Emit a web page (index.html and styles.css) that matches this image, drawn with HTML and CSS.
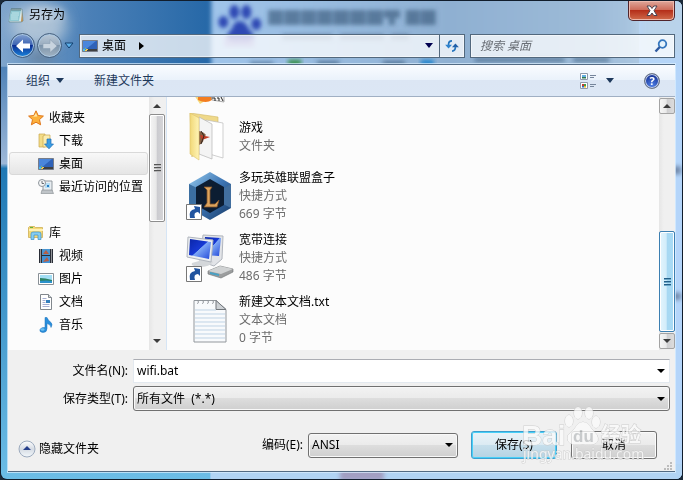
FILE: index.html
```
<!DOCTYPE html>
<html lang="zh-CN">

<head>
    <meta charset="utf-8">
    <title>另存为</title>
    <link rel="stylesheet" href="styles.css">
</head>

<body>
    <div class="window">
        <!-- Blurred desktop seen through the glass frame -->
        <svg class="glass" viewBox="0 0 683 480" preserveAspectRatio="none" aria-hidden="true">
            <defs>
                <filter id="soft" x="-20%" y="-20%" width="140%" height="140%"><feGaussianBlur stdDeviation="2" /></filter>
                <filter id="wide" x="-50%" y="-50%" width="200%" height="200%"><feGaussianBlur stdDeviation="7" /></filter>
                <linearGradient id="leftGlass" x1="0" y1="0" x2="0" y2="1">
                    <stop offset="0" stop-color="#6f98c5" />
                    <stop offset=".14" stop-color="#5083b8" />
                    <stop offset=".34" stop-color="#9db8d8" />
                    <stop offset=".35" stop-color="#1f78b4" />
                    <stop offset="1" stop-color="#6cbde6" />
                </linearGradient>
                <linearGradient id="topGlass" x1="0" y1="0" x2="1" y2="0">
                    <stop offset="0" stop-color="#7fa5cc" />
                    <stop offset=".4" stop-color="#4b80b7" />
                    <stop offset="1" stop-color="#2366a6" />
                </linearGradient>
                <linearGradient id="pageGlass" x1="0" y1="0" x2="1" y2="0">
                    <stop offset="0" stop-color="#9fc4ea" />
                    <stop offset=".5" stop-color="#8fb0d2" />
                    <stop offset=".8" stop-color="#9dbbd8" />
                    <stop offset="1" stop-color="#b9d3ea" />
                </linearGradient>
            </defs>
            <rect width="683" height="480" fill="url(#leftGlass)" />
            <rect width="220" height="66" fill="url(#topGlass)" />
            <ellipse cx="38" cy="24" rx="28" ry="22" fill="#c4d2dd" opacity=".75" filter="url(#wide)" />
            <ellipse cx="40" cy="56" rx="14" ry="9" fill="#6b7480" opacity=".5" filter="url(#wide)" />
            <rect x="211" y="-6" width="480" height="80" fill="url(#pageGlass)" filter="url(#soft)" />
            <rect x="640" y="20" width="50" height="470" fill="#b4d5fa" />
            <rect x="640" y="-6" width="50" height="60" fill="#b9d3ea" filter="url(#wide)" />
            <rect x="210" y="465" width="473" height="20" fill="#b2d4f4" />
            <rect x="340" y="468" width="44" height="14" fill="#a29fc2" filter="url(#soft)" />
            <g fill="#2d49b4" filter="url(#soft)">
                <ellipse cx="234" cy="11" rx="5" ry="7" />
                <ellipse cx="246" cy="11" rx="5" ry="7" />
                <ellipse cx="223" cy="21" rx="5" ry="6" />
                <ellipse cx="256" cy="23" rx="5" ry="6" />
                <path d="M239 20q6 0 9 7l6 8q-2 8-14 6-12 2-14-6l6-8q2-7 7-7z" />
            </g>
            <path d="M224 36h30v10h-30z" fill="#8b7cc4" opacity=".6" filter="url(#soft)" />
            <g fill="#3f5f82" filter="url(#soft)">
                <path d="M268 9h15v15h-15zM284 9h16v15h-16zM301 9h15v15h-15zM317 9h15v15h-15zM333 9h16v15h-16zM350 9h16v15h-16zM367 9h16v15h-16zM384 9h16v8h-16zM389 15h6v9h-6zM406 9h14v15h-14zM421 9h15v15h-15z" opacity=".7" />
                <path d="M282 33h50v6h-50zM340 33h44v6h-44zM391 33h18v6h-18z" opacity=".5" />
                <path d="M250 61h23v4h-23zM317 60h22v5h-22zM383 60h22v5h-22zM475 57h90v4h-90zM574 57h36v4h-36z" opacity=".7" />
            </g>
            <path d="M288 59h13v6h-13z" fill="#368f47" filter="url(#soft)" />
            <path d="M421 59h13v6h-13z" fill="#2384ce" filter="url(#soft)" />
            <path d="M672 166h10v8h-10zM672 293h10v7h-10z" fill="#7189ab" filter="url(#soft)" />
        </svg>

        <header class="title-bar">
            <svg class="icon-16" viewBox="0 0 16 16" aria-hidden="true">
                <path d="M3 2h11l1 12-2 1H1z" fill="#d7e9eb" stroke="#7797a0" />
                <path d="M3 3h10l-2 11H1z" fill="#8fc8d2" />
                <path d="M4 6h7M3 8h8M3 10h7M3 12h7" stroke="#d9f2f5" stroke-width=".7" />
                <path d="M4 1v3M6 1v3M8 1v3M10 1v3M12 1v3" stroke="#4d6970" stroke-width=".8" />
                <path d="M14 5l1 9-2 1z" fill="#b98a4c" />
            </svg>
            <h1 class="title">另存为</h1>
            <button class="close-btn" type="button" aria-label="关闭">
                <svg width="14" height="12" viewBox="0 0 14 12">
                    <path d="M2 1h3.200L7 3.500 8.800 1H12L9 5.700 12 10.500H8.800L7 8l-1.800 2.500H2L5 5.700z" fill="#fff" stroke="#4d4451" />
                </svg>
            </button>
        </header>

        <div class="nav-bar">
            <div class="nav-buttons">
                <button class="round-btn back" type="button" aria-label="后退">
                    <svg width="16" height="14" viewBox="0 0 16 14"><path d="M1 7l7-6.500v4H15v5H8v4z" fill="#fff" /></svg>
                </button>
                <button class="round-btn forward" type="button" aria-label="前进">
                    <svg width="16" height="14" viewBox="0 0 16 14"><path d="M15 7L8 .5v4H1v5h7v4z" fill="#c8d4df" stroke="#8ba0b2" stroke-width=".6" /></svg>
                </button>
                <button class="plain-btn" type="button" aria-label="最近的位置">
                    <svg width="10" height="7" viewBox="0 0 10 7"><path d="M1 1h8L5 6z" fill="#5eb2ec" stroke="#123e6c" /></svg>
                </button>
            </div>
            <div class="address-bar">
                <svg class="icon-16" viewBox="0 0 16 16" aria-hidden="true"><use href="#desktop" /></svg>
                <button class="crumb" type="button">桌面</button>
                <svg width="5" height="8" viewBox="0 0 5 8" aria-hidden="true"><path d="M0 0l5 4-5 4z" fill="#000" /></svg>
                <button class="plain-btn address-drop" type="button" aria-label="以前的位置">
                    <svg width="8" height="5" viewBox="0 0 8 5"><path d="M0 0h8L4 5z" fill="#000050" /></svg>
                </button>
                <button class="refresh-btn" type="button" aria-label="刷新">
                    <svg width="14" height="12" viewBox="0 0 16 14" fill="none" stroke="#2474bd" stroke-width="2">
                        <path d="M8 1Q4 1 4 5v2" />
                        <path d="M0 5.500h8l-4 4.500z" fill="#2e82cd" stroke="none" />
                        <path d="M8 8.500h8L12 4z" fill="#225fa8" stroke="none" />
                        <path d="M12 8q0 5-4 5" />
                    </svg>
                </button>
            </div>
            <div class="search-box">
                <input class="search-input" type="text" placeholder="搜索 桌面" aria-label="搜索 桌面">
                <svg width="14" height="14" viewBox="0 0 14 14" fill="none" aria-hidden="true">
                    <circle cx="8.500" cy="5" r="3.800" fill="#e5f3fc" stroke="#3577be" stroke-width="1.800" />
                    <path d="M5.700 8L1.500 12.500" stroke="#2e5aa0" stroke-width="2.400" />
                </svg>
            </div>
        </div>

        <main class="content">
            <div class="toolbar">
                <button class="tool-btn" type="button">组织
                    <svg width="8" height="5" viewBox="0 0 8 5"><path d="M0 0h8L4 5z" fill="#1e395b" /></svg>
                </button>
                <button class="tool-btn" type="button">新建文件夹</button>
                <button class="tool-btn view-btn" type="button" aria-label="更改视图">
                    <svg width="16" height="16" viewBox="0 0 16 16">
                        <path d="M.5.5h7v6h-7zM.5 9.500h7v6h-7z" fill="#fff" stroke="#8e99aa" />
                        <path d="M2 2h4v2H2z" fill="#63aee0" /><path d="M2 4h4v1.500H2z" fill="#327950" />
                        <path d="M2 11h2v2H2z" fill="#c23a32" /><path d="M4 11h2v2H4z" fill="#43a047" />
                        <path d="M2 13h2v1.500H2z" fill="#2f6bc4" /><path d="M4 13h2v1.500H4z" fill="#f0b82a" />
                        <path d="M10 2.500h6M10 4.500h4M10 11.500h6M10 13.500h4" stroke="#75859b" />
                    </svg>
                    <svg width="8" height="5" viewBox="0 0 8 5"><path d="M0 0h8L4 5z" fill="#1e395b" /></svg>
                </button>
                <button class="help-btn" type="button" aria-label="帮助">?</button>
            </div>

            <div class="panes">
                <nav class="tree">
                    <ul class="tree-list">
                        <li><a class="tree-item root" href="#">
                            <svg class="icon-16" viewBox="0 0 16 16"><path d="M8 .8l2.200 4.700 5.200.6-3.900 3.500 1.100 5.200L8 12.200l-4.600 2.600 1.100-5.200L.6 6.100l5.200-.6z" fill="#fcb13c" stroke="#e0761a" /><path d="M8 3l1.300 3.500-5.500.3 2-.6z" fill="#ffe9a8" /></svg>收藏夹</a></li>
                        <li><a class="tree-item" href="#">
                            <svg class="icon-16" viewBox="0 0 16 16"><path d="M1 1h6v13H1z" fill="#f3dc86" stroke="#c8a84e" stroke-width=".7" /><path d="M7 2h5v12H5V3z" fill="#fbedb0" stroke="#c8a84e" stroke-width=".7" /><path d="M9 6h4v5h2.500L11 15.800 6.500 11H9z" fill="#3a9de4" stroke="#1f6eb4" stroke-width=".7" /></svg>下载</a></li>
                        <li><a class="tree-item selected" href="#">
                            <svg class="icon-16" viewBox="0 0 16 16">
                                <g id="desktop"><path d="M.5 2.500h15v11H.5z" fill="#2f62b8" stroke="#777d88" /><path d="M1 3h13L3 12H1z" fill="#4a86dc" /><path d="M5 11h10v2H5z" fill="#3e4043" /><path d="M3 10h1v1H3z" fill="#7ed052" /><path d="M4 11h2v1H4zM3 12h2v1H3z" fill="#f6cd4b" /><path d="M1 11h2v2H1z" fill="#4ac0f0" /></g>
                            </svg>桌面</a></li>
                        <li><a class="tree-item" href="#">
                            <svg class="icon-16" viewBox="0 0 16 16"><path d="M5 2h9v10H5z" fill="#e8edf1" stroke="#91999f" /><path d="M7 4h5v5H7z" fill="#b6def4" /><path d="M9 6h2v2H9z" fill="#277dc4" /><path d="M4 11h10l1.500 3.500H3z" fill="#bfc4c8" stroke="#83898e" stroke-width=".6" /><circle cx="4" cy="4" r="3.500" fill="#f5f6f7" stroke="#8e959b" /><path d="M4 2v2.500h2" fill="none" stroke="#495157" stroke-width=".8" /></svg>最近访问的位置</a></li>
                    </ul>
                    <ul class="tree-list">
                        <li><a class="tree-item root" href="#">
                            <svg class="icon-16" viewBox="0 0 16 16"><path d="M.5 2.500l1-1h5l1 1h7v10H.5z" fill="#f4d978" stroke="#c9a747" stroke-width=".7" /><path d="M1 4h14v2H1z" fill="#fff1b4" /><path d="M2 2h3v1H2z" fill="#63b33e" /><path d="M3 14.500V9q0-2 2-2h6q2 0 2 2v5.500h-3V10H6v4.500z" fill="#86cdf1" stroke="#3d91c8" stroke-width=".7" /></svg>库</a></li>
                        <li><a class="tree-item" href="#">
                            <svg class="icon-16" viewBox="0 0 16 16"><path d="M1 1h14v14H1z" fill="#292d36" /><path d="M4 1h8v6H4z" fill="#4a96d2" /><path d="M4 8h8v7H4z" fill="#4093d8" /><path d="M5 6l3-4 3 4zM5 14l4-5 2 4z" fill="#b65e46" /><path d="M2.500 1.500v14M13.500 1.500v14" stroke="#fff" stroke-dasharray="1 1" /></svg>视频</a></li>
                        <li><a class="tree-item" href="#">
                            <svg class="icon-16" viewBox="0 0 16 16"><path d="M.5 2.500h15v11H.5z" fill="#fff" stroke="#899096" /><path d="M2 4h12v8H2z" fill="#a3def5" /><path d="M2 7q5 0 12 2v3H2z" fill="#2b8265" /><path d="M2 10q6-1 12 0v2H2z" fill="#2b91cb" /></svg>图片</a></li>
                        <li><a class="tree-item" href="#">
                            <svg class="icon-16" viewBox="0 0 16 16"><path d="M2.500.5h8l3 3v12h-11z" fill="#fff" stroke="#81878d" /><path d="M10.500.5v3h3" fill="#d4dade" stroke="#81878d" /><path d="M4.500 4.500h4M4.500 6.500h3M4.500 8.500h3M4.500 10.500h7M4.500 12.500h7" stroke="#a5aed2" /><path d="M8 6h4v3H8z" fill="#327fbd" /></svg>文档</a></li>
                        <li><a class="tree-item" href="#">
                            <svg class="icon-16" viewBox="0 0 16 16"><path d="M7 .5h2q1 3 4 5 2 2 0 5 0-3-4-4v5q0 4-4 4-4-.5-3-3 1-2.500 5-2z" fill="#2a8fdc" stroke="#1c71b8" stroke-width=".5" /><ellipse cx="4.500" cy="12.500" rx="2" ry="1.300" fill="#70c1f2" /></svg>音乐</a></li>
                    </ul>
                </nav>
                <div class="scrollbar tree-scroll" aria-hidden="true">
                    <span class="scroll-btn up"></span>
                    <span class="scroll-thumb"><i class="grip"></i></span>
                    <span class="scroll-btn down"></span>
                </div>

                <ul class="file-list">
                    <li class="file">
                        <svg class="file-icon" viewBox="0 0 48 48" aria-hidden="true"><path d="M4 32l10 15 8-5V28z" fill="#f5da7c" /><path d="M12 34h14v9q-6 4-14 0z" fill="#f37d20" /><path d="M24 32h14v13l-12-2z" fill="#f6f6f6" stroke="#888" stroke-width=".7" /><path d="M26 41h3v3M31 41h2v3M35 40l2 4" stroke="#222" fill="none" /></svg>
                    </li>
                    <li class="file">
                        <svg class="file-icon" viewBox="0 0 48 48" aria-hidden="true">
                            <defs><linearGradient id="fold"><stop offset="0" stop-color="#f1d877" /><stop offset="1" stop-color="#fff4b6" /></linearGradient></defs>
                            <path d="M4 0l28 4v6H14L6 44z" fill="#efd98a" stroke="#d2b966" stroke-width=".6" />
                            <path d="M20 7l17 3v35l-17-5z" fill="#fff" stroke="#bcbcbc" stroke-width=".7" />
                            <path d="M13 4l13 7v35l-13-5z" fill="#f4f4f4" stroke="#b5b5b5" stroke-width=".7" />
                            <path d="M13 18q5 1 7 4l-3 3q2 4-4 7z" fill="#876043" /><path d="M14 22l10 2-8 3z" fill="#c33d25" /><path d="M15 18l3 5-3 8" fill="none" stroke="#352720" />
                            <path d="M4 0l9 5v42L4 41z" fill="url(#fold)" stroke="#ddc36c" stroke-width=".6" />
                        </svg>
                        <div class="file-info">
                            <div class="file-name">游戏</div>
                            <div class="file-meta">文件夹</div>
                        </div>
                    </li>
                    <li class="file">
                        <svg class="file-icon" viewBox="0 0 48 48" aria-hidden="true">
                            <defs><linearGradient id="hex" x1="0" y1="0" x2="1" y2="1"><stop offset="0" stop-color="#96cbed" /><stop offset=".5" stop-color="#3d75b4" /><stop offset="1" stop-color="#173a66" /></linearGradient></defs>
                            <path d="M24 0l21 12v24L24 48 3 36V12z" fill="url(#hex)" />
                            <path d="M3 12l10 5v14L3 36z" fill="#3c6fa1" /><path d="M45 12l-10 6v13l10 5z" fill="#426f9f" />
                            <path d="M24 7l14 8v18l-14 8-14-8V15z" fill="#0c1d32" />
                            <path d="M18 15h8l-2 3v14h5l4-4-2 7H18l3-4V18z" fill="#dca45d" stroke="#835328" stroke-width=".8" />
                            <g id="shortcut"><path d="M.5 32.500h15v15H.5z" fill="#fff" stroke="#777" /><path d="M4 46q-2-8 5-9l-1-3 6 1v7l-2-2q-5 0-3 6z" fill="#21549f" /></g>
                        </svg>
                        <div class="file-info">
                            <div class="file-name">多玩英雄联盟盒子</div>
                            <div class="file-meta">快捷方式</div>
                            <div class="file-meta">669 字节</div>
                        </div>
                    </li>
                    <li class="file">
                        <svg class="file-icon" viewBox="0 0 48 48" aria-hidden="true">
                            <defs><linearGradient id="screen" x1="0" y1="0" x2="1" y2="1"><stop offset="0" stop-color="#0b26a8" /><stop offset=".48" stop-color="#1739d5" /><stop offset=".5" stop-color="#7fa8f5" /><stop offset="1" stop-color="#2247d9" /></linearGradient></defs>
                            <path d="M17 1l20 1-1 23-8 7-14-5z" fill="#e2e4e8" stroke="#b0b5bd" /><path d="M19 3l16 1-2 18-15-1z" fill="url(#screen)" />
                            <path d="M12 23l11 2 4 3q-3 5-14 5-9-1-7-4l7-2z" fill="#d4d7da" />
                            <path d="M2 3l25 3-2 22L1 23z" fill="#eceef0" stroke="#b0b5bd" /><path d="M4 5l21 3-2 17L3 21z" fill="url(#screen)" />
                            <path d="M22 37l12-5 13 3v3l-12 6-13-4z" fill="#9b9d9e" stroke="#6d7072" stroke-width=".6" /><path d="M22 37l12-5 13 3-12 5z" fill="#d0d2d3" /><path d="M24 38l9 2v2l-9-2z" fill="#47a1c4" />
                            <use href="#shortcut" />
                        </svg>
                        <div class="file-info">
                            <div class="file-name">宽带连接</div>
                            <div class="file-meta">快捷方式</div>
                            <div class="file-meta">486 字节</div>
                        </div>
                    </li>
                    <li class="file">
                        <svg class="file-icon" viewBox="0 0 48 48" aria-hidden="true">
                            <path d="M8 4.500h22l10 9V46H8z" fill="#f8fafc" stroke="#92979c" />
                            <path d="M30 4.500v9h10z" fill="#cdd1d5" stroke="#72777c" />
                            <path d="M9 14h21M9 18h30M9 22h30M9 26h30M9 30h30M9 34h30M9 38h30M9 42h30" stroke="#bfd3e5" />
                            <path d="M11 7.500a1.500 1.500 0 1 0 0-3M16 7.500a1.500 1.500 0 1 0 0-3M21 7.500a1.500 1.500 0 1 0 0-3M26 7.500a1.500 1.500 0 1 0 0-3" fill="none" stroke="#8a8f94" stroke-width=".8" />
                        </svg>
                        <div class="file-info">
                            <div class="file-name">新建文本文档.txt</div>
                            <div class="file-meta">文本文档</div>
                            <div class="file-meta">0 字节</div>
                        </div>
                    </li>
                </ul>
                <div class="scrollbar file-scroll" aria-hidden="true">
                    <span class="scroll-btn up"></span>
                    <span class="scroll-thumb"><i class="grip"></i></span>
                    <span class="scroll-btn down"></span>
                </div>
            </div>

            <form class="save-form">
                <div class="fields">
                    <label for="fileName">文件名(N):</label>
                    <div class="name-box">
                        <input id="fileName" class="name-input" type="text" value="wifi.bat">
                        <button class="plain-btn" type="button" aria-label="以前的文件名">
                            <svg width="8" height="4" viewBox="0 0 8 4"><path d="M0 0h8L4 4z" /></svg>
                        </button>
                    </div>
                    <label for="fileType">保存类型(T):</label>
                    <div class="select-box">
                        <select id="fileType"><option>所有文件&nbsp; (*.*)</option></select>
                        <svg class="select-arrow" width="8" height="4" viewBox="0 0 8 4"><path d="M0 0h8L4 4z" /></svg>
                    </div>
                </div>
                <div class="actions">
                    <button class="hide-btn" type="button">
                        <svg width="18" height="18" viewBox="0 0 18 18">
                            <defs><linearGradient id="knob" x1="0" y1="0" x2="0" y2="1"><stop offset="0" stop-color="#fff" /><stop offset=".5" stop-color="#d5dbe3" /><stop offset="1" stop-color="#f3f8fc" /></linearGradient></defs>
                            <circle cx="9" cy="9" r="8" fill="url(#knob)" stroke="#9caabd" /><path d="M5 10l4-4 4 4z" fill="#263f8b" />
                        </svg>隐藏文件夹</button>
                    <label for="encoding">编码(E):</label>
                    <div class="select-box encoding">
                        <select id="encoding"><option>ANSI</option></select>
                        <svg class="select-arrow" width="8" height="4" viewBox="0 0 8 4"><path d="M0 0h8L4 4z" /></svg>
                    </div>
                    <button class="btn primary" type="submit">保存(S)</button>
                    <button class="btn" type="button">取消</button>
                </div>
            </form>
        </main>

        <svg class="watermark" width="128" height="60" viewBox="0 0 128 60" aria-hidden="true">
            <g class="mark">
                <text x="2" y="40" class="mark-logo">Bai</text>
                <ellipse cx="49" cy="16" rx="4" ry="6" />
                <ellipse cx="58" cy="8" rx="4" ry="6" />
                <ellipse cx="69" cy="8" rx="4" ry="6" />
                <ellipse cx="76" cy="17" rx="4" ry="6" />
                <path d="M63 17q5 0 8 6l6 7q3 7-3 9-6 1-11 0-6 1-11 0-6-2-4-9l7-7q3-6 8-6z" />
                <text x="81" y="37" class="mark-cn">经验</text>
                <text x="3" y="54" class="mark-url">jingyan.baidu.com</text>
            </g>
            <text x="53" y="37" class="mark-du">du</text>
        </svg>
        <svg class="size-grip" width="8" height="8" viewBox="0 0 8 8" aria-hidden="true"><path d="M6 0h2v2H6zM3 3h2v2H3zM6 3h2v2H6zM0 6h2v2H0zM3 6h2v2H3zM6 6h2v2H6z" fill="#bcbcbc" /></svg>
    </div>
</body>

</html>
```
FILE: styles.css
```
* {
    box-sizing: border-box;
}

body {
    margin: 0;
    background: #1c2b3a;
    color: #000;
    font: 12px/18px "Noto Sans", "Noto Sans CJK SC", sans-serif;
}

button,
input,
select {
    font: inherit;
    color: inherit;
}

button {
    padding: 0;
    border: 0;
    background: none;
}

svg {
    flex: none;
    display: block;
}

ul {
    margin: 0;
    padding: 0;
    list-style: none;
}

/* Window frame */
.window {
    position: relative;
    display: flex;
    flex-direction: column;
    min-height: 100vh;
    padding: 0 7px 7px;
    border: 1px solid #111d2c;
    border-radius: 7px;
    overflow: hidden;
    isolation: isolate;
}

.glass {
    position: absolute;
    inset: 0;
    z-index: -1;
    width: 100%;
    height: 100%;
}

.icon-16 {
    width: 16px;
    height: 16px;
}

.title-bar {
    display: flex;
    align-items: flex-start;
    height: 32px;
    padding-top: 6px;
    gap: 5px;
}

.title {
    margin: 0;
    font-size: 12px;
    font-weight: normal;
    line-height: 16px;
    text-shadow: 0 0 6px #fff;
}

.close-btn {
    display: flex;
    align-items: center;
    justify-content: center;
    width: 47px;
    height: 20px;
    margin: -6px 0 0 auto;
    border: 1px solid #50242b;
    border-top: 0;
    border-radius: 0 0 5px 5px;
    background: linear-gradient(#dfa79b, #cd6a58 48%, #b52f1a 50%, #d06b4b);
    box-shadow: inset 0 0 0 1px #edb9ad;
}

/* Address and search row */
.nav-bar {
    display: flex;
    align-items: center;
    gap: 5px;
    height: 25px;
    margin-bottom: 6px;
}

.nav-buttons {
    display: flex;
    align-items: center;
    gap: 2px;
    padding-left: 2px;
}

.round-btn {
    display: flex;
    align-items: center;
    justify-content: center;
    width: 25px;
    height: 25px;
    border: 1px solid #455f7d;
    border-radius: 50%;
    box-shadow: inset 0 0 0 1px #a9c7e2;
}

.back {
    background: linear-gradient(#84a3d2, #3b62b1 48%, #0c2f94 50%, #1b87dd);
}

.forward {
    background: linear-gradient(#bac9d7, #99acbf 48%, #7c94ab 50%, #a3b4c3);
}

.plain-btn {
    display: flex;
    align-items: center;
    justify-content: center;
}

.address-bar,
.search-box {
    display: flex;
    align-items: center;
    height: 24px;
    border: 1px solid #52687d;
    background: rgba(255, 255, 255, 0.75);
    box-shadow: inset 0 0 0 1px rgba(255, 255, 255, 0.5);
}

.address-bar {
    flex: 1;
    padding-left: 2px;
}

.crumb {
    margin: 0 13px 0 4px;
}

.address-drop {
    width: 20px;
    height: 22px;
    margin-left: auto;
}

.refresh-btn {
    display: flex;
    align-items: center;
    justify-content: center;
    width: 25px;
    height: 22px;
    border-left: 1px solid #52687d;
}

.search-box {
    flex: 0 1 203px;
    padding: 0 6px 0 9px;
}

.search-input {
    flex: 1;
    min-width: 0;
    padding: 0;
    border: 0;
    outline: 0;
    background: none;
}

.search-input::placeholder {
    color: #6a6f76;
    font-style: italic;
}

/* Dialog body */
.content {
    flex: 1;
    display: flex;
    flex-direction: column;
    border: 1px solid #536b84;
    border-width: 1px 0;
    outline: 1px solid rgba(220, 240, 255, 0.7);
    background: #f0f0f0;
}

.toolbar {
    display: flex;
    align-items: center;
    height: 32px;
    padding: 0 15px 0 18px;
    border-bottom: 1px solid #a0afc3;
    background: linear-gradient(#fafcff, #eaf2fb 48%, #dce6f4 50%, #dce7f5);
    color: #1e395b;
}

.tool-btn {
    display: flex;
    align-items: center;
    gap: 6px;
    margin-right: 30px;
}

.view-btn {
    gap: 10px;
    margin-left: auto;
}

.help-btn {
    width: 16px;
    height: 16px;
    border: 1px solid #6c7584;
    border-radius: 50%;
    background: radial-gradient(circle at 50% 80%, #4e7fe6, #1c3b9f 70%);
    box-shadow: inset 0 0 0 1px #c5d1e8;
    color: #fff;
    font-size: 11px;
    font-weight: bold;
    line-height: 14px;
}

.panes {
    flex: 1;
    display: flex;
    min-height: 252px;
    background: #fcfcfc;
}

.tree {
    width: 141px;
    padding: 9px 1px 0;
}

.tree-list + .tree-list {
    margin-top: 23px;
}

.tree-item {
    display: flex;
    align-items: center;
    gap: 5px;
    height: 23px;
    padding-left: 28px;
    border: 1px solid transparent;
    border-radius: 3px;
    color: #000;
    text-decoration: none;
    white-space: nowrap;
}

.root {
    padding-left: 18px;
}

.selected {
    border-color: #d9d9d9;
    background: linear-gradient(#f8f8f8, #e5e5e5);
}

/* Scrollbars */
.scrollbar {
    display: flex;
    flex-direction: column;
    width: 16px;
    padding: 1px 0;
    background: linear-gradient(90deg, #e6e6e6, #f0f0f0 30%);
}

.scroll-btn {
    display: flex;
    align-items: center;
    justify-content: center;
    height: 16px;
}

.scroll-btn::before {
    content: "";
    border: 4px solid transparent;
    border-top: 0;
    border-bottom-color: #3c3c3c;
}

.down::before {
    transform: rotate(180deg);
}

.scroll-thumb {
    display: flex;
    align-items: center;
    justify-content: center;
    border: 1px solid #8d8d8d;
    border-radius: 2px;
    background: linear-gradient(90deg, #f5f5f5, #e8e8e8 45%, #cbcbcf 50%, #d6d6d9);
    box-shadow: inset 0 0 0 1px #fff;
}

.grip {
    width: 7px;
    height: 8px;
    background: repeating-linear-gradient(#555 0 1px, #b8b8b8 1px 2px, transparent 2px 3px);
}

.tree-scroll {
    width: 18px;
    border-right: 1px solid #d6e5f5;
}

.tree-scroll .scroll-thumb {
    height: 108px;
    margin-right: 1px;
    margin-bottom: auto;
}

.tree-scroll .scroll-btn {
    margin-right: 1px;
}

.file-scroll .scroll-btn {
    border: 1px solid #a3a3a3;
    border-radius: 2px;
    background: linear-gradient(90deg, #f6f6f6, #e9e9e9 45%, #cfcfd1 50%, #dcdcdc);
}

.file-scroll .scroll-thumb {
    height: 101px;
    margin: auto 0 1px;
    border-color: #3c7fb1;
    background: linear-gradient(90deg, #e2f4fd, #d2edfa 45%, #a7d8f2 50%, #a8dbf5);
}

.file-scroll .grip {
    background: repeating-linear-gradient(#245f88 0 1px, #6ca8c9 1px 2px, transparent 2px 3px);
}

/* File list, scrolled to its end */
.file-list {
    flex: 1;
    display: flex;
    flex-direction: column;
    justify-content: flex-end;
    height: 252px;
    padding-left: 19px;
    overflow: hidden;
}

.file {
    flex: none;
    display: flex;
    align-items: center;
    gap: 5px;
    padding: 4px 0;
}

.file:last-child {
    padding-bottom: 2px;
}

.file-icon {
    width: 48px;
    height: 48px;
}

.file-meta {
    color: #6d6d6d;
}

/* File name, type and actions */
.save-form {
    padding: 9px 5px 12px 0;
}

.fields {
    display: grid;
    grid-template-columns: 120px 1fr;
    align-items: center;
    gap: 3px 5px;
}

.fields label {
    text-align: right;
}

.name-box {
    display: flex;
    height: 24px;
    padding: 0 4px 0 3px;
    border: 1px solid #e3e9ef;
    border-top-color: #abadb3;
    background: #fff;
}

.name-input {
    flex: 1;
    min-width: 0;
    padding: 0;
    border: 0;
    outline: 0;
    background: none;
}

.select-box {
    display: grid;
    align-items: center;
}

.select-box select {
    grid-area: 1 / 1;
    width: 100%;
    height: 25px;
    padding: 0 3px;
    appearance: none;
    border: 1px solid #707070;
    border-radius: 3px;
    background: linear-gradient(#f2f2f2, #ebebeb 48%, #dddddd 50%, #cfcfcf);
    box-shadow: inset 0 0 0 1px #f8f8f8;
}

.select-arrow {
    grid-area: 1 / 1;
    justify-self: end;
    margin-right: 5px;
    pointer-events: none;
}

.actions {
    display: flex;
    align-items: center;
    margin: 20px 13px 0 0;
}

.hide-btn {
    display: flex;
    align-items: center;
    gap: 3px;
    margin: 7px auto 0 10px;
}

.encoding {
    width: 150px;
    margin: 0 13px 0 5px;
}

.btn {
    width: 86px;
    height: 28px;
    border: 1px solid #707070;
    border-radius: 3px;
    background: linear-gradient(#f2f2f2, #ebebeb 48%, #dddddd 50%, #cfcfcf);
    box-shadow: inset 0 0 0 1px #fbfbfb;
}

.primary {
    margin-right: 14px;
    border-color: #3c9fcf;
    background: linear-gradient(#eaf3f8, #dcebf3 48%, #c6dfec 50%, #b5d3e3);
    box-shadow: inset 0 0 0 1px #48d0f8;
}

/* Overlays */
.watermark {
    position: absolute;
    right: 34px;
    bottom: 14px;
    pointer-events: none;
    opacity: 0.8;
}

.mark {
    fill: #fafafa;
    stroke: #c6c6c6;
    stroke-width: 1px;
    paint-order: stroke;
}

.mark-logo,
.mark-du {
    font: bold 28px "Liberation Sans", sans-serif;
}

.mark-du {
    font-size: 17px;
    fill: #bfc2c4;
}

.mark-cn {
    font: bold 20px "Noto Sans CJK SC", sans-serif;
}

.mark-url {
    font: 14px "Noto Sans", sans-serif;
}

.size-grip {
    position: absolute;
    right: 10px;
    bottom: 9px;
}
```
